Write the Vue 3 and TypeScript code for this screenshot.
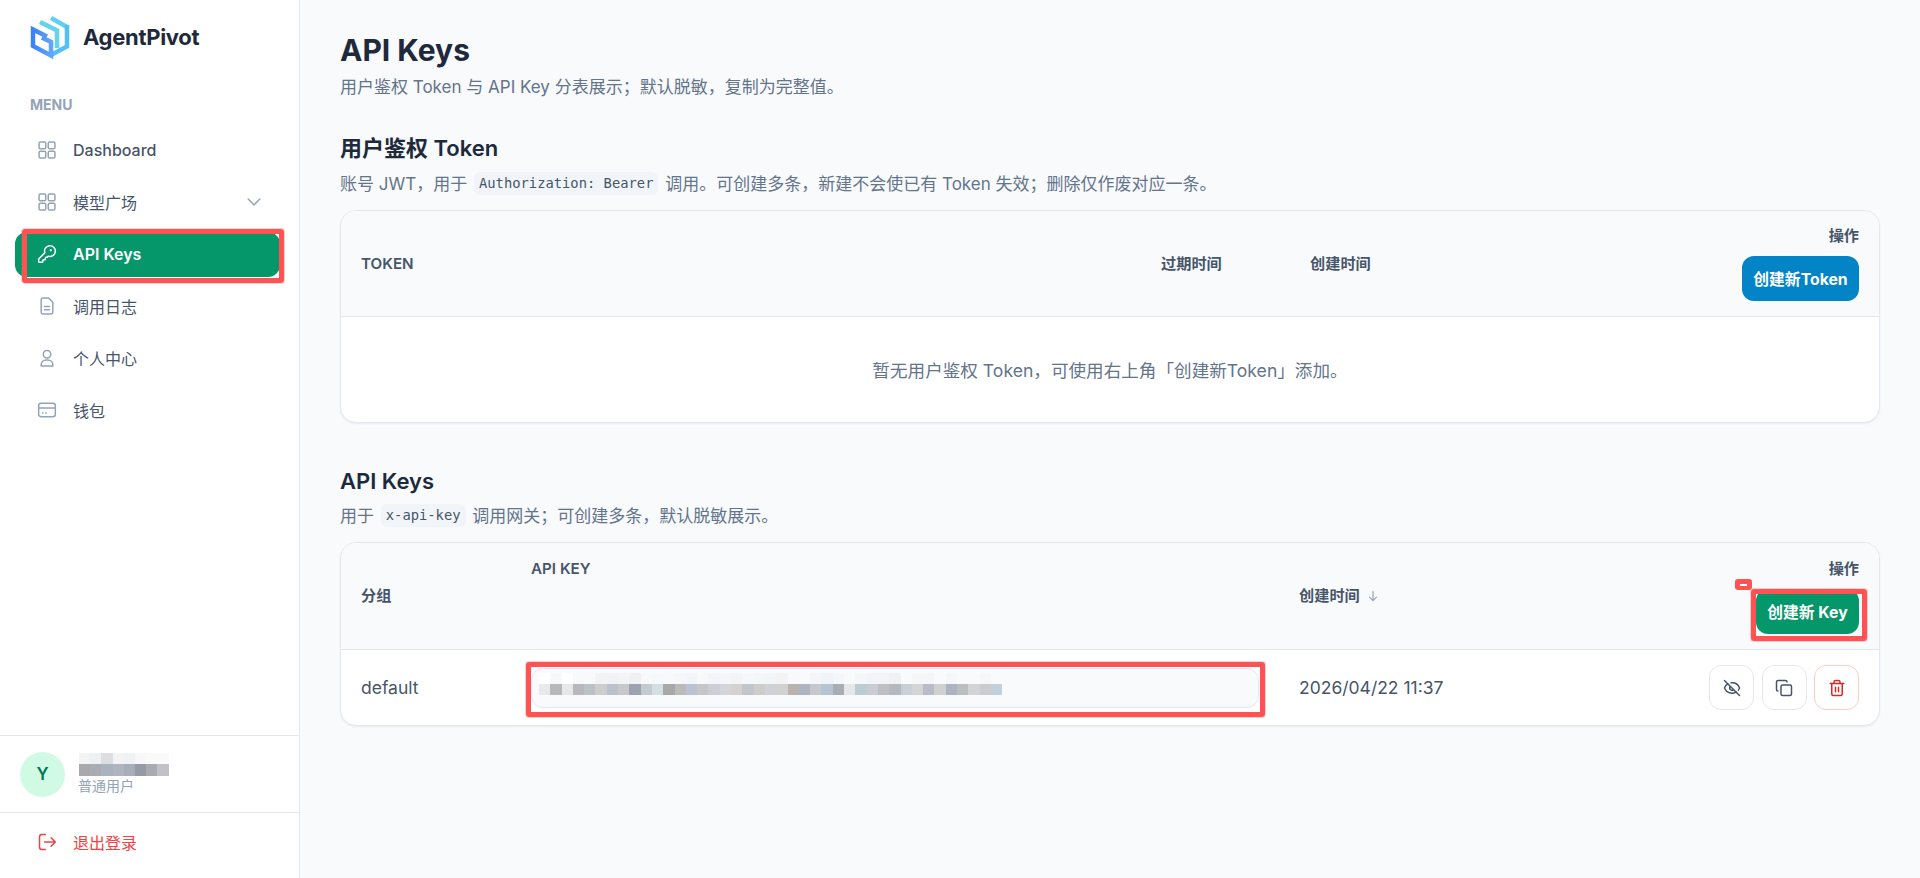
<script setup lang="ts">
interface NavItem { label: string; icon: string; chevron?: boolean; active?: boolean; cjk?: boolean }
const nav: NavItem[] = [
  { label: 'Dashboard', icon: 'grid' },
  { label: '模型广场', icon: 'grid', chevron: true, cjk: true },
  { label: 'API Keys', icon: 'key', active: true },
  { label: '调用日志', icon: 'doc', cjk: true },
  { label: '个人中心', icon: 'user', cjk: true },
  { label: '钱包', icon: 'card', cjk: true },
]
const userTop = ['f5f4f5', 'eef1f4', 'dddee2', 'f3f3f4', 'eef2f7', 'f8f8f8', 'fafafa', 'fafafa']
const userBottom = ['a9a8ad', 'a9acb3', 'a9b3bd', 'b0b4c0', 'a9adb9', '959ba6', 'a9abb1', 'c2c1c7']
const keyTop = ['ffffff', 'f7f8f9', 'ffffff', 'f8f9fb', 'f8f9fb', 'f2f3f5', 'f1f2f5', 'f3f4f6', 'eef0f2', 'f7f9fb', 'f6f9fb', 'f8f9fb', 'f6f7f9', 'f3f5f9', 'f8f9fb', 'f3f5f8', 'f5f6f8', 'f3f4f6', 'f6f9fc', 'f4f7fa', 'f3f6f9', 'f1f3f5', 'f8f9fb', 'f9fafc', 'f4f6f9', 'f0f3f8', 'f4f7fa', 'f9fafc', 'f5f8fb', 'f3f4f7', 'f2f4f7', 'eff1f4', 'f9fafc', 'f5f6f8', 'f4f6f9', 'f9fafc', 'f5f7fa', 'f9fafc', 'f9fafc', 'f6f7f9', 'f9fafc']
const keyBottom = ['e8e9ea', 'b9b8b8', 'e6e8ea', 'b7b9bf', 'bac2c8', 'cecdcd', 'bcc2cc', 'c6c8cc', '9da2b0', 'c4cad0', 'd3dfe2', 'a8a8a9', 'bcbbba', 'bcc2d2', 'c6c6c9', 'ccced6', 'd3d5da', 'd4d1ce', 'c2c5ca', 'cfcdcb', 'd0d2d7', 'd2d1d2', 'b8b3ae', 'aeb4c0', 'c6c8ce', 'b6c3d2', 'a8acb3', 'e6e7e9', 'bacdd3', 'c9cdd3', 'bfbfc3', 'b6b8bf', 'c9cfd7', 'd4d3d6', 'b9bcc8', 'd0d0d1', 'aeb3c0', 'b9bebf', 'd1d3d5', 'cccbd0', 'c2d0dc']
const hex = (c: string) => ({ background: '#' + c })
</script>

<template>
  <div class="app">
    <aside class="sidebar">
      <div class="brand">
        <svg class="logo" viewBox="0 0 40 44" fill="none" stroke-width="4.500" stroke-linejoin="miter">
          <defs>
            <linearGradient id="lg" x1="0" y1="0" x2="1" y2="0">
              <stop offset="0" stop-color="#3b82f6" />
              <stop offset="1" stop-color="#60a5fa" />
            </linearGradient>
          </defs>
          <path d="M38 12.500 L21 3" stroke="#5fd0f0" />
          <path d="M10 7 L27 15.500 L27 33" stroke="#67d3e8" />
          <path d="M21 40 L37 31.500 L37 10" stroke="#52bff5" />
          <path d="M17 21.500 L3 14.500 L3 31 L21 40.500 L21 27 L12 22.500" stroke="url(#lg)" />
        </svg>
        <span class="brand-name">AgentPivot</span>
      </div>
      <div class="menu-label">MENU</div>
      <nav class="nav">
        <a v-for="item in nav" :key="item.label" class="nav-item" :class="{ active: item.active, cjk: item.cjk }">
          <svg class="nav-icon" viewBox="0 0 24 24" fill="none" stroke="currentColor" stroke-width="1.800" stroke-linecap="round" stroke-linejoin="round">
            <template v-if="item.icon === 'grid'">
              <rect x="2.500" y="2.500" width="8" height="8" rx="1.500" />
              <rect x="13.500" y="2.500" width="8" height="8" rx="1.500" />
              <rect x="2.500" y="13.500" width="8" height="8" rx="1.500" />
              <rect x="13.500" y="13.500" width="8" height="8" rx="1.500" />
            </template>
            <template v-else-if="item.icon === 'key'">
              <path d="M2.586 17.414A2 2 0 0 0 2 18.828V21a1 1 0 0 0 1 1h3a1 1 0 0 0 1-1v-1a1 1 0 0 1 1-1h1a1 1 0 0 0 1-1v-1a1 1 0 0 1 1-1h.172a2 2 0 0 0 1.414-.586l.814-.814a6.500 6.500 0 1 0-4-4z" />
              <circle cx="16.500" cy="7.500" r=".5" fill="currentColor" />
            </template>
            <template v-else-if="item.icon === 'doc'">
              <path d="M14 2.500H7a2 2 0 0 0-2 2v15a2 2 0 0 0 2 2h10a2 2 0 0 0 2-2V7.500z" />
              <path d="M9 12.500h6M9 16.500h6" />
            </template>
            <template v-else-if="item.icon === 'user'">
              <circle cx="12" cy="7.500" r="4.500" />
              <path d="M5 21.500v-1.500a6 6 0 0 1 6-5.500h2a6 6 0 0 1 6 5.500v1.500z" />
            </template>
            <template v-else>
              <rect x="2" y="4" width="20" height="16" rx="3" />
              <path d="M2 9.500h20M6.500 15.500h.5M10.500 15.500h.5" />
            </template>
          </svg>
          <span class="nav-text">{{ item.label }}</span>
          <svg v-if="item.chevron" class="chevron" viewBox="0 0 24 24" fill="none" stroke="currentColor" stroke-width="1.800" stroke-linecap="round" stroke-linejoin="round">
            <path d="m5 8.500 7 7 7-7" />
          </svg>
          <span v-if="item.active" class="annot annot-nav"></span>
        </a>
      </nav>
      <div class="user">
        <div class="avatar">Y</div>
        <div class="user-meta">
          <div class="mosaic">
            <div class="mosaic-row user-row">
              <i v-for="(c, i) in userTop" :key="i" :style="hex(c)"></i>
            </div>
            <div class="mosaic-row user-row">
              <i v-for="(c, i) in userBottom" :key="i" :style="hex(c)"></i>
            </div>
          </div>
          <div class="role">普通用户</div>
        </div>
      </div>
      <a class="logout">
        <svg class="nav-icon" viewBox="0 0 24 24" fill="none" stroke="currentColor" stroke-width="1.800" stroke-linecap="round" stroke-linejoin="round">
          <path d="M10 21H6a3 3 0 0 1-3-3V6a3 3 0 0 1 3-3h4" />
          <path d="M9 12h13M17 7l5 5-5 5" />
        </svg>
        <span>退出登录</span>
      </a>
    </aside>

    <main class="main">
      <h1 class="title">API Keys</h1>
      <p class="sub">用户鉴权 Token 与 API Key 分表展示；默认脱敏，复制为完整值。</p>

      <h2 class="section-title first">用户鉴权 Token</h2>
      <p class="desc">账号 JWT，用于 <code>Authorization: Bearer</code> 调用。可创建多条，新建不会使已有 Token 失效；删除仅作废对应一条。</p>
      <section class="card">
        <div class="thead token-cols">
          <div class="th">TOKEN</div>
          <div class="th">过期时间</div>
          <div class="th">创建时间</div>
          <div class="th actions-head">
            <span>操作</span>
            <button class="btn btn-blue">创建新Token</button>
          </div>
        </div>
        <div class="empty">暂无用户鉴权 Token，可使用右上角「创建新Token」添加。</div>
      </section>

      <h2 class="section-title second">API Keys</h2>
      <p class="desc">用于 <code>x-api-key</code> 调用网关；可创建多条，默认脱敏展示。</p>
      <section class="card">
        <div class="thead thead-key key-cols">
          <div class="th">分组</div>
          <div class="th th-top">API KEY</div>
          <div class="th th-sort">
            创建时间
            <svg class="sort" viewBox="0 0 24 24" fill="none" stroke="currentColor" stroke-width="2" stroke-linecap="round" stroke-linejoin="round">
              <path d="M12 4v16M6 14l6 6 6-6" />
            </svg>
          </div>
          <div class="th actions-head">
            <span>操作</span>
            <div class="btn-wrap">
              <button class="btn btn-green">创建新 Key</button>
              <span class="annot annot-btn"></span>
              <span class="handle"></span>
            </div>
          </div>
        </div>
        <div class="row key-cols">
          <div class="cell">default</div>
          <div class="key-wrap">
            <div class="key-box">
              <div class="mosaic">
                <div class="mosaic-row key-row">
                  <i v-for="(c, i) in keyTop" :key="i" :style="hex(c)"></i>
                </div>
                <div class="mosaic-row key-row">
                  <i v-for="(c, i) in keyBottom" :key="i" :style="hex(c)"></i>
                </div>
              </div>
            </div>
            <span class="annot annot-key"></span>
          </div>
          <div class="cell">2026/04/22 11:37</div>
          <div class="row-actions">
            <button class="icon-btn">
              <svg viewBox="0 0 24 24" fill="none" stroke="currentColor" stroke-width="2" stroke-linecap="round" stroke-linejoin="round">
                <path d="M10.733 5.076a10.744 10.744 0 0 1 11.205 6.575 1 1 0 0 1 0 .696 10.747 10.747 0 0 1-1.444 2.490" />
                <path d="M14.084 14.158a3 3 0 0 1-4.242-4.242" />
                <path d="M17.479 17.499a10.750 10.750 0 0 1-15.417-5.151 1 1 0 0 1 0-.696 10.750 10.750 0 0 1 4.446-5.143" />
                <path d="m2 2 20 20" />
              </svg>
            </button>
            <button class="icon-btn">
              <svg viewBox="0 0 24 24" fill="none" stroke="currentColor" stroke-width="2" stroke-linecap="round" stroke-linejoin="round">
                <rect x="8" y="8" width="14" height="14" rx="2" />
                <path d="M4 16c-1.100 0-2-.900-2-2V4c0-1.100.900-2 2-2h10c1.100 0 2 .900 2 2" />
              </svg>
            </button>
            <button class="icon-btn danger">
              <svg viewBox="0 0 24 24" fill="none" stroke="currentColor" stroke-width="2" stroke-linecap="round" stroke-linejoin="round">
                <path d="M3 6h18M19 6v14a2 2 0 0 1-2 2H7a2 2 0 0 1-2-2V6M8 6V4a2 2 0 0 1 2-2h4a2 2 0 0 1 2 2v2M10 11v6M14 11v6" />
              </svg>
            </button>
          </div>
        </div>
      </section>
    </main>
  </div>
</template>

<style>
html, body { margin: 0; background: #f8fafc; }
</style>

<style scoped>
.app {
  display: flex;
  min-height: 878px;
  font-family: Inter, "Noto Sans CJK SC", sans-serif;
  color: #475569;
  background: #f8fafc;
}
.sidebar {
  width: 300px;
  box-sizing: border-box;
  flex: none;
  display: flex;
  flex-direction: column;
  background: #fff;
  border-right: 1px solid #e2e8f0;
}
.brand { display: flex; align-items: center; gap: 13px; padding: 15px 0 0 30px; height: 44px; }
.logo { width: 40px; height: 44px; flex: none; }
.brand-name { font-size: 22px; font-weight: 700; color: #1e293b; letter-spacing: -0.3px; }
.menu-label { margin: 36px 0 0 30px; font-size: 14px; line-height: 20px; font-weight: 700; color: #94a3b8; }
.nav { display: flex; flex-direction: column; gap: 7px; margin: 13px 19px 0 15px; }
.nav-item {
  position: relative;
  height: 45px;
  box-sizing: border-box;
  display: flex;
  align-items: center;
  padding: 0 0 2px 22px;
  border-radius: 12px;
  font-size: 16px;
  font-weight: 500;
  color: #475569;
}
.nav-item.cjk { font-weight: 400; }
.nav-item .nav-icon { color: #94a3b8; }
.nav-item.active { background: #059669; color: #fff; font-weight: 600; }
.nav-item.active .nav-icon { color: #fff; }
.nav-icon { width: 20px; height: 20px; flex: none; }
.nav-text { margin-left: 16px; }
.chevron { width: 20px; height: 20px; margin-left: auto; margin-right: 16px; color: #94a3b8; }
.annot {
  position: absolute;
  box-sizing: border-box;
  border: 5px solid #ff5252;
  border-radius: 3px;
  box-shadow: 0 0 0 1px rgba(255, 82, 82, 0.25);
  pointer-events: none;
}
.annot-nav { left: 7px; right: -4px; top: -3px; bottom: -6px; }
.user {
  margin-top: auto;
  height: 77px;
  box-sizing: border-box;
  border-top: 1px solid #e2e8f0;
  display: flex;
  align-items: center;
  padding-left: 20px;
  gap: 13px;
}
.avatar {
  width: 45px;
  height: 45px;
  border-radius: 50%;
  background: #d1fae5;
  color: #047857;
  display: flex;
  align-items: center;
  justify-content: center;
  font-size: 17px;
  font-weight: 600;
  flex: none;
}
.mosaic { display: flex; flex-direction: column; }
.mosaic-row { display: flex; }
.mosaic-row i { display: block; }
.user-row i { width: 11.200px; height: 11.500px; }
.key-row i { width: 11.300px; height: 11px; }
.user-meta { display: flex; flex-direction: column; margin-top: -1px; }
.user-meta .mosaic { margin-left: 1px; }
.role { font-size: 14px; line-height: 18px; color: #94a3b8; margin-top: 1px; }
.logout {
  height: 66px;
  box-sizing: border-box;
  border-top: 1px solid #e2e8f0;
  display: flex;
  align-items: center;
  padding: 0 0 8px 37px;
  gap: 16px;
  font-size: 16px;
  color: #ef4444;
}
.main { flex: 1; min-width: 0; padding: 32px 40px 0; }
.title { margin: 0; font-size: 30px; line-height: 36px; font-weight: 700; color: #1e293b; }
.sub, .desc { margin: 7px 0 0; height: 24px; font-size: 17px; line-height: 24px; color: #64748b; }
.section-title { margin: 0; font-size: 22px; line-height: 30px; font-weight: 600; color: #1e293b; }
.section-title.first { margin-top: 34px; }
.section-title.second { margin-top: 43px; }
.desc { margin-top: 9px; }
.second + .desc { margin-top: 8px; }
code {
  display: inline-block;
  font-family: "DejaVu Sans Mono", "Liberation Mono", monospace;
  font-size: 13.800px;
  line-height: 23px;
  padding: 0 5px;
  margin: 0 2px;
  border-radius: 6px;
  background: #f1f5f9;
  color: #475569;
  vertical-align: top;
}
.card {
  margin-top: 14px;
  background: #fff;
  border: 1px solid #e2e8f0;
  border-radius: 16px;
  overflow: hidden;
  box-shadow: 0 1px 2px rgba(15, 23, 42, 0.06);
}
.thead {
  display: grid;
  align-items: center;
  background: #f8fafc;
  border-bottom: 1px solid #e2e8f0;
  box-sizing: content-box;
  height: 105px;
  padding: 0 20px;
}
.thead-key { height: 106px; }
.token-cols { grid-template-columns: 800px 149px 1fr 130px; }
.key-cols { grid-template-columns: 170px 768px 1fr 170px; padding: 0 20px; }
.th { font-size: 15.200px; line-height: 20px; font-weight: 600; color: #475569; }
.th-top { align-self: start; padding-top: 16px; }
.th-sort { display: flex; align-items: center; gap: 6px; }
.sort { width: 14px; height: 14px; color: #94a3b8; }
.actions-head {
  display: flex;
  flex-direction: column;
  align-items: flex-end;
  gap: 10px;
  align-self: start;
  padding-top: 15px;
}
.thead-key .actions-head { padding-top: 16px; }
.btn {
  height: 45px;
  border: 0;
  padding: 0;
  border-radius: 12px;
  color: #fff;
  font-family: inherit;
  font-size: 15.800px;
  font-weight: 700;
  display: block;
}
.btn-blue { width: 117px; background: #0284c7; }
.btn-green { width: 103px; background: #059669; }
.btn-wrap { position: relative; }
.annot-btn { left: -5px; right: -8px; top: 0; bottom: -7px; }
.handle {
  position: absolute;
  left: -21px;
  top: -10px;
  width: 17px;
  height: 11px;
  border-radius: 3px;
  background: #ff5252;
}
.handle::after {
  content: "";
  position: absolute;
  left: 5px;
  right: 5px;
  top: 5px;
  height: 2px;
  background: #fff;
}
.empty {
  height: 105px;
  display: flex;
  align-items: center;
  justify-content: center;
  font-size: 17.600px;
  color: #64748b;
}
.row { display: grid; align-items: center; height: 75px; padding: 0 20px; }
.cell { font-size: 17.500px; color: #475569; }
.key-wrap { position: relative; margin-right: 40px; }
.key-box {
  box-sizing: border-box;
  height: 40px;
  border: 1px solid #e2e8f0;
  border-radius: 12px;
  background: #f8fafc;
  padding: 4px 0 0 7px;
}
.annot-key { left: -5px; right: -6px; top: -6px; bottom: -9px; }
.row-actions { display: flex; justify-content: flex-end; gap: 7.500px; }
.icon-btn {
  width: 45px;
  height: 45px;
  box-sizing: border-box;
  border: 1px solid #e2e8f0;
  border-radius: 12px;
  background: #fff;
  color: #475569;
  display: flex;
  align-items: center;
  justify-content: center;
  padding: 0;
}
.icon-btn svg { width: 18px; height: 18px; }
.icon-btn.danger { border-color: #fecaca; color: #dc2626; }
</style>
